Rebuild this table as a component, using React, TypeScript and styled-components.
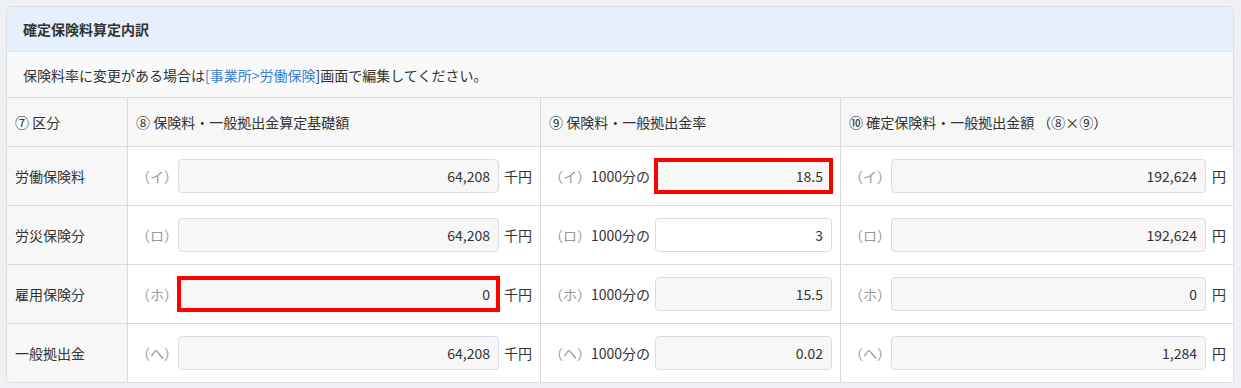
import React from "react"
import styled, { createGlobalStyle } from "styled-components"

const GlobalStyle = createGlobalStyle`
  html, body {
    margin: 0;
    background: #eef0f3;
  }
  body {
    padding: 6px 7px 6px 6px;
    font-family: "Noto Sans CJK JP", "Noto Sans", sans-serif;
    font-size: 14px;
    color: #333;
  }
  * {
    box-sizing: border-box;
  }
`

const Card = styled.section`
  background: #fff;
  border: 1px solid #dcdfe4;
  border-radius: 4px;
  overflow: hidden;
`

const CardHeader = styled.div`
  height: 45px;
  display: flex;
  align-items: center;
  padding: 0 16px;
  background: #e6f0fc;
  border-bottom: 1px solid #dfe5ec;
  font-weight: 700;
  color: #333;
`

const Notice = styled.div`
  height: 45px;
  display: flex;
  align-items: center;
  padding: 0 16px;
  background: #f9f9f9;
`

const Link = styled.a`
  color: #3f7fcb;
  text-decoration: none;
`

const Table = styled.div`
  display: grid;
  grid-template-columns: 121px 413px 300px 1fr;
`

const Cell = styled.div<{ $head?: boolean; $label?: boolean; $last?: boolean; $pr?: number }>`
  height: ${(p) => (p.$head ? 49 : 59)}px;
  display: flex;
  align-items: center;
  padding: 0 ${(p) => p.$pr ?? 8}px 0 8px;
  border-top: 1px solid #dadada;
  border-right: ${(p) => (p.$last ? "none" : "1px solid #dadada")};
  background: ${(p) => (p.$head || p.$label ? "#f7f7f7" : "#fff")};
  white-space: nowrap;
`

const Prefix = styled.span`
  color: #999;
  flex: none;
`

const Rate = styled.span`
  color: #333;
  flex: none;
`

const Amount = styled.input<{ $editable?: boolean; $flagged?: boolean }>`
  flex: 1;
  min-width: 0;
  height: 34px;
  padding: 0 ${(p) => (p.$flagged ? 6 : 8)}px;
  border: ${(p) => (p.$flagged ? "3px solid #f00" : "1px solid #d9dce1")};
  border-radius: ${(p) => (p.$flagged ? 0 : 4)}px;
  box-shadow: ${(p) => (p.$flagged ? "0 0 0 1px #f00" : "none")};
  background: ${(p) => (p.$editable ? "#fff" : "#f7f7f7")};
  font-family: inherit;
  font-size: 14px;
  color: #333;
  text-align: right;
  outline: none;
`

const RateAmount = styled(Amount)`
  margin-left: 5px;
`

const Unit = styled.span<{ $gap: number }>`
  flex: none;
  margin-left: ${(p) => p.$gap}px;
  color: #333;
`

type Row = {
  label: string
  mark: string
  base: string
  rate: string
  total: string
  baseFlagged?: boolean
  rateFlagged?: boolean
  rateEditable?: boolean
}

const rows: Row[] = [
  { label: "労働保険料", mark: "イ", base: "64,208", rate: "18.5", total: "192,624", rateFlagged: true },
  { label: "労災保険分", mark: "ロ", base: "64,208", rate: "3", total: "192,624", rateEditable: true },
  { label: "雇用保険分", mark: "ホ", base: "0", rate: "15.5", total: "0", baseFlagged: true },
  { label: "一般拠出金", mark: "ヘ", base: "64,208", rate: "0.02", total: "1,284" },
]

const App: React.FC = () => {
  return (
    <>
      <GlobalStyle />
      <Card>
        <CardHeader>確定保険料算定内訳</CardHeader>
        <Notice>
          保険料率に変更がある場合は<Link href="#">[事業所&gt;労働保険</Link>]画面で編集してください。
        </Notice>
        <Table>
          <Cell $head>⑦ 区分</Cell>
          <Cell $head>⑧ 保険料・一般拠出金算定基礎額</Cell>
          <Cell $head>⑨ 保険料・一般拠出金率</Cell>
          <Cell $head $last>⑩ 確定保険料・一般拠出金額 （⑧×⑨）</Cell>

          {rows.map((r) => (
            <React.Fragment key={r.label}>
              <Cell $label>{r.label}</Cell>
              <Cell>
                <Prefix>（{r.mark}）</Prefix>
                <Amount readOnly value={r.base} $flagged={r.baseFlagged} />
                <Unit $gap={5}>千円</Unit>
              </Cell>
              <Cell>
                <Prefix>（{r.mark}）</Prefix>
                <Rate>1000分の</Rate>
                <RateAmount readOnly value={r.rate} $editable={r.rateEditable} $flagged={r.rateFlagged} />
              </Cell>
              <Cell $last $pr={7}>
                <Prefix>（{r.mark}）</Prefix>
                <Amount readOnly value={r.total} />
                <Unit $gap={6}>円</Unit>
              </Cell>
            </React.Fragment>
          ))}
        </Table>
      </Card>
    </>
  )
}

export default App
